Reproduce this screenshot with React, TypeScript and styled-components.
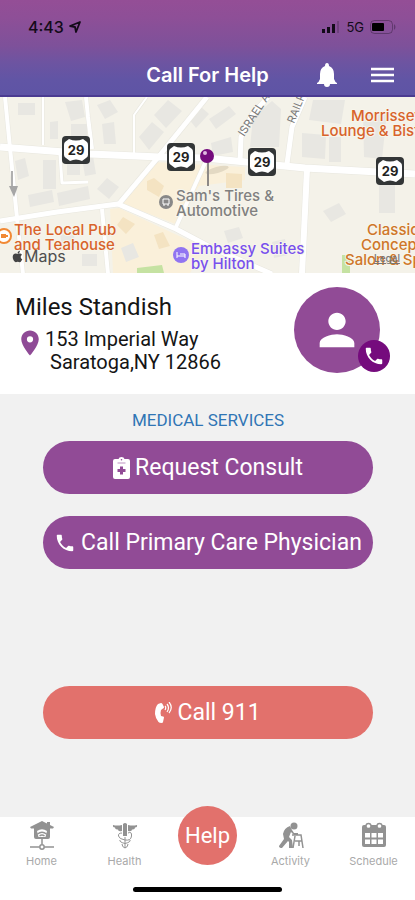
import React from "react";
import styled, { createGlobalStyle } from "styled-components";
import { MdPhone, MdPerson, MdLocationOn } from "react-icons/md";
import { FaApple } from "react-icons/fa";

const GlobalStyle = createGlobalStyle`
  *, *::before, *::after { box-sizing: border-box; }
  body { margin: 0; font-family: Roboto, "Liberation Sans", sans-serif; background: #fff; }
  button { font: inherit; border: 0; padding: 0; background: none; cursor: pointer; }
`;

const Screen = styled.div`
  min-height: 100vh;
  display: flex;
  flex-direction: column;
  background: #f1f1f1;
`;

const Header = styled.header`
  background: linear-gradient(#944e96 0%, #8e4f97 18%, #7e519a 48%, #6d54a1 66%, #6155a5 84%, #5e54a5 100%);
  border-bottom: 2px solid #4b3b91;
`;

const StatusBar = styled.div`
  display: flex;
  align-items: center;
  justify-content: space-between;
  height: 54px;
  padding: 0 19px 0 28px;
  color: #130b19;
  font-family: Inter, sans-serif;
`;

const StatusGroup = styled.div<{ $gap: number }>`
  display: flex;
  align-items: center;
  gap: ${(p) => p.$gap}px;
`;

const Clock = styled.span`
  font-size: 16px;
  font-weight: 500;
`;

const Network = styled.span`
  font-size: 13px;
`;

const TitleBar = styled.div`
  display: grid;
  grid-template-columns: 1fr auto 1fr;
  align-items: center;
  height: 41px;
  padding: 0 20px;
  color: #fff;
`;

const Title = styled.h1`
  grid-column: 2;
  margin: 0;
  font-family: Inter, sans-serif;
  font-size: 20px;
  line-height: 24px;
  font-weight: 600;
`;

const HeaderActions = styled.div`
  display: flex;
  align-items: center;
  justify-content: flex-end;
  gap: 32px;
`;

const IconButton = styled.button`
  display: flex;
  color: #fff;
`;

const MapArea = styled.section`
  height: 176px;
  background: #f4f2e9;
`;

const MapSvg = styled.svg`
  display: block;
  width: 100%;
  height: 100%;
  font-family: Inter, sans-serif;
  font-weight: 500;
`;

const Contact = styled.section`
  display: flex;
  justify-content: space-between;
  padding: 14px 35px 20px 15px;
  background: #fff;
  color: #151515;
`;

const Name = styled.h2`
  margin: 7px 0 8px;
  font-size: 24px;
  line-height: 26px;
  font-weight: 400;
`;

const AddressRow = styled.div`
  display: flex;
  color: #8f4a96;
`;

const Address = styled.address`
  color: #151515;
  font-style: normal;
  font-size: 20px;
  line-height: 23px;
`;

const AddressLine = styled.div<{ $indent?: boolean }>`
  padding-left: ${(p) => (p.$indent ? 5 : 0)}px;
`;

const Avatar = styled.div`
  position: relative;
  display: grid;
  place-items: center;
  flex: none;
  width: 86px;
  height: 86px;
  border-radius: 50%;
  background: #914b96;
  color: #fff;
`;

const CallBadge = styled.button`
  position: absolute;
  right: -10px;
  bottom: 1px;
  display: grid;
  place-items: center;
  width: 32px;
  height: 32px;
  border-radius: 50%;
  background: #750b7d;
  color: #fff;
`;

const Services = styled.main`
  flex: 1;
  display: flex;
  flex-direction: column;
  padding: 16px 42px 78px 43px;
`;

const SectionTitle = styled.h3`
  margin: 0 0 11px;
  text-align: center;
  color: #3075b5;
  font-size: 17px;
  line-height: 20px;
  font-weight: 400;
`;

const Pill = styled.button<{ $tone: "purple" | "coral" }>`
  display: flex;
  align-items: center;
  justify-content: center;
  gap: 5px;
  height: 53px;
  flex: none;
  border-radius: 27px;
  background: ${(p) => (p.$tone === "purple" ? "#914b96" : "#e2716c")};
  color: #fff;
  font-size: 23px;
  white-space: nowrap;

  & + & { margin-top: 22px; }
`;

const Emergency = styled.div`
  display: grid;
  margin-top: auto;
`;

const TabBar = styled.nav`
  display: grid;
  grid-template-columns: repeat(5, 1fr);
  height: 67px;
  background: #fff;
`;

const Tab = styled.button`
  display: flex;
  flex-direction: column;
  align-items: center;
  gap: 4px;
  padding-top: 3px;
  color: #929292;
  font-family: Inter, sans-serif;
  font-size: 11px;
  line-height: 14px;
`;

const TabLabel = styled.span`
  color: #a9a9a9;
`;

const HelpTab = styled.button`
  justify-self: center;
  width: 59px;
  height: 59px;
  margin-top: -11px;
  border-radius: 50%;
  background: #e2716c;
  color: #fff;
  font-size: 22px;
`;

const HomeIndicator = styled.div`
  display: flex;
  justify-content: center;
  padding: 3px 0 8px;
  background: #fff;

  &::after {
    content: "";
    width: 36%;
    height: 5px;
    border-radius: 3px;
    background: #000;
  }
`;

const roads: [string, number][] = [
  ["M0 50 90 57 160 60 205 61 305 71 415 77", 7],
  ["M5 0 10 51 17 121 23 177", 4],
  ["M43 0V48", 2],
  ["M86 0 88 20 92 52", 4],
  ["M147 0 134 18 134 57", 2],
  ["M207 0 160 58 118 108", 5],
  ["M0 124 57 115 118 107 176 132 210 150 272 177", 5],
  ["M176 130 205 66", 4],
  ["M102 112 108 177", 4],
  ["M60 58 62 86 88 85", 3],
  ["M240 65 241 40 252 18 268 0", 5],
  ["M287 67 292 30 305 0", 5],
  ["M307 72 302 177", 6],
];

const buildings =
  "M18 6h17v12h-17zM65 5l17-2 3 17-14 4zM50 25l8-1v18h-8zM71 27h16v17H71zM97 8l13-5 8 12-13 7zM102 27l12-2 2 22h-12zM139 40l13-15 12 10-15 18zM154 18l14-15 14 11-16 17zM188 21l12-12 9 8-13 14zM15 64l10-3 4 18-11 4zM43 63h13v29H43zM67 63h13v15H67zM82 61l11-2 3 18-11 2zM28 98l24-5 2 12-24 5zM57 96l31-7 2 13-31 7zM97 92l10-11 12 9-10 12zM60 134l13-2 3 20-14 2zM121 151l12-5 6 14-13 5zM82 157h15v12H82zM253 20l19-16 9 8-2 38h-29zM313 3h32l-4 24-32-4zM302 36l24 2-1 24-23-2zM329 40h12v25h-12zM363 15h24l-5 47-18-2zM379 88h16v28h-16zM323 114l16-8 7 11-15 8zM272 145l13-3 3 16-14 3zM224 134l15-4 4 11-15 5zM209 22l20-13 7 8-20 15zM211 46l20-6 2 15-20 4z";

const shields = [
  [76, 53],
  [181, 60],
  [262, 65],
  [390, 74],
];

function RouteShield({ x, y }: { x: number; y: number }) {
  return (
    <g transform={`translate(${x} ${y})`}>
      <rect x="-14" y="-14" width="28" height="28" rx="4" fill="#333637" />
      <path
        d="M-7-11Q0-8 7-11L11-8Q12-7 12-5V5Q12 7 10 8L6 11Q0 8-6 11L-10 8Q-12 7-12 5V-5Q-12-7-11-8Z"
        fill="#fff"
      />
      <text y="5" textAnchor="middle" fontSize="13" fontWeight="700" fill="#222">29</text>
    </g>
  );
}

function StreetMap() {
  return (
    <MapSvg viewBox="0 0 415 176" preserveAspectRatio="xMidYMid slice" role="img" aria-label="Map">
      <rect width="415" height="176" fill="#f4f2e9" />
      <path d="M153 65 245 70 245 83 199 89 178 128 121 106Z M110 112 119 111 205 151 190 176 113 176Z" fill="#faf0da" />
      <path d={buildings} fill="#e8e7e2" />
      <path d="M147 84l7-3 10 8-5 11-12-7zM117 128l6-8 12 7-9 10zM226 76l16 1v14h-16zM154 138l9-3 7 14-11 3z" fill="#f4e3c2" />
      <path d="M137 171l25-3 2 8h-27zM342 158h8v18h-8z" fill="#c5e2a2" />
      <g fill="none" stroke="#e8e7df" strokeLinejoin="round">
        {roads.map(([d, w]) => <path key={d} d={d} strokeWidth={w + 1} />)}
      </g>
      <g fill="none" stroke="#fff" strokeLinejoin="round">
        {roads.map(([d, w]) => <path key={d} d={d} strokeWidth={w} />)}
      </g>
      <path d="M12 74V90" stroke="#b0b0b0" strokeWidth="2" />
      <path d="M9 89h9l-4 11z" fill="#a6a6a6" />
      {shields.map(([x, y]) => <RouteShield key={x} x={x} y={y} />)}

      <g fontSize="11" fontWeight="400" fill="#777">
        <text transform="translate(244 40) rotate(-57)">ISRAEL A</text>
        <text transform="translate(294 27) rotate(-68)">RAILR</text>
      </g>

      <ellipse cx="217" cy="73" rx="12" ry="3" transform="rotate(-15 217 73)" fill="#877b6733" />
      <path d="M208 64V89" stroke="#8d8987" strokeWidth="2" />
      <circle cx="207" cy="59" r="7" fill="#750b7d" />
      <circle cx="205" cy="56" r="2" fill="#dfb9e0" />

      <g stroke="#f7f5eb" strokeWidth="2" paintOrder="stroke" fontSize="15" strokeLinejoin="round">
        <g fill="#808080">
          <text x="176" y="104">Sam's Tires &amp;</text>
          <text x="176" y="119">Automotive</text>
        </g>
        <g fill="#d8632b">
          <text x="14" y="138">The Local Pub</text>
          <text x="14" y="153">and Teahouse</text>
          <text x="351" y="24">Morrissey's</text>
          <text x="321" y="39">Lounge &amp; Bistro</text>
        </g>
        <g fill="#cf7629">
          <text x="367" y="138">Classic</text>
          <text x="361" y="153">Concepts</text>
          <text x="345" y="168">Salon &amp; Spa</text>
        </g>
        <g fill="#7850ed">
          <text x="191" y="157">Embassy Suites</text>
          <text x="191" y="172">by Hilton</text>
        </g>
      </g>
      <circle cx="166" cy="105" r="7" fill="#888" />
      <path d="M163 102h6v5h-6zM164 109v-2M168 109v-2" fill="none" stroke="#fff" />
      <circle cx="4" cy="139" r="7" fill="#fff" stroke="#f18a36" strokeWidth="2" />
      <path d="M1 137h5v4H1zM6 138h2v2H6" fill="#f18a36" />
      <circle cx="181" cy="158" r="8" fill="#9174f1" />
      <path d="M177 155v6M177 159h8v2M180 157h5v2" stroke="#fff" fill="none" />
      <FaApple x={11} y={153} size={13} color="#444" />
      <text x="24" y="165" fontSize="16" fontWeight="400" fill="#4e4e4e">Maps</text>
      <text x="374" y="165" fontSize="10" fill="#777" textDecoration="underline">Legal</text>
    </MapSvg>
  );
}

function LocationArrowIcon() {
  return (
    <svg width="14" height="14" viewBox="0 0 14 14" fill="none" stroke="currentColor" strokeWidth="1.8" strokeLinejoin="round" aria-hidden="true">
      <path d="M12 2 2 6l5 1 1 5Z" />
    </svg>
  );
}

function BellIcon() {
  return (
    <svg width="22" height="24" viewBox="0 0 22 24" fill="currentColor" aria-hidden="true">
      <path d="M11 0q2 0 2 3 5 2 5 8v5q1 3 3 4v1H1v-1q2-1 3-4v-5q0-6 5-8 0-3 2-3ZM8 21h6q0 3-3 3t-3-3Z" />
    </svg>
  );
}

function ClipboardIcon() {
  return (
    <svg width="17" height="22" viewBox="0 0 17 22" aria-hidden="true">
      <path d="M2 2h3.5q.5-2 3-2t3 2H15q2 0 2 2v16q0 2-2 2H2q-2 0-2-2V4q0-2 2-2Z" fill="#fff" />
      <path d="M4.5 6h8" stroke="#c9a4cb" strokeWidth="1.2" />
      <circle cx="8.500" cy="2.800" r=".8" fill="#914b96" />
      <path d="M7 9.500h3v2.500h2.500v3H10v2.500H7V15H4.500v-3H7Z" fill="#914b96" />
    </svg>
  );
}

function RingingPhoneIcon() {
  return (
    <svg width="17" height="22" viewBox="0 0 17 22" fill="currentColor" aria-hidden="true">
      <path d="M3 2 6 1q1 0 1.500 1L9 5q0 1-1 1.500L6 8q-1 3 0 6l2 .5q1 0 1 1l-1 4.500q0 1-1.500 1-2 0-3-1-3-3.500-3.500-8Q0 5 3 2Z" />
      <path d="M10 4q1.500 1.500 0 4M12 2q3 3.500 0 8M14 0q4.500 5.500 0 11" fill="none" stroke="currentColor" strokeWidth="1.200" />
    </svg>
  );
}

function HomeIcon() {
  return (
    <svg width="26" height="30" viewBox="0 0 26 30" fill="currentColor" aria-hidden="true">
      <path d="M13 1 1 7l1 1.500h3V17q0 2 2 2h12q2 0 2-2V8.500h3L25 7l-4-2V2h-3v1.500Z" />
      <path d="M8 11q5-3.500 10 0l-1.500 6h-7Z" fill="#fff" />
      <path d="M8.500 14q4.500-3.500 9 0M10.500 16q2.500-2 5 0M13 19v5M1 27h9.500M15.500 27H25" fill="none" stroke="currentColor" strokeWidth="1.500" />
      <circle cx="13" cy="27" r="2.200" fill="#fff" stroke="currentColor" strokeWidth="1.500" />
    </svg>
  );
}

function HealthIcon() {
  return (
    <svg width="26" height="30" viewBox="0 0 26 30" fill="currentColor" aria-hidden="true">
      <path d="M11 4q2-2 4 0v12h-4ZM10 5v6Q6 12 6 9.500 3 10 3 7.500.500 7.500 1 5q4 1 9 0ZM16 5v6q4 1 4-1.500 3 .5 3-2 2.500 0 2-2.500-4 1-9 0Z" />
      <path d="M10 13q-4 0-3.500 3T13 20t6.500-4-3.500-3M8 20q-1 2 5 3.500 6-1.500 5-3.500M10 24q0 3 3 4 3-1 3-4M13 17v11" fill="none" stroke="currentColor" strokeWidth="1" />
    </svg>
  );
}

function ActivityIcon() {
  return (
    <svg width="26" height="30" viewBox="0 0 26 30" fill="currentColor" aria-hidden="true">
      <circle cx="16" cy="6" r="3.500" />
      <path d="M12 6Q6 8 5 14l1 5-5 7q0 2 3 2l6-7 1 1v6h4l-1-8-3-3 2-5 3 3h4v-2h-4l-2-3Z" />
      <path d="M14 15h9l2 13M17 16l-2 12M24 21h-7M21 21v5" fill="none" stroke="currentColor" strokeWidth="1.500" />
    </svg>
  );
}

function ScheduleIcon() {
  return (
    <svg width="26" height="30" viewBox="0 0 26 30" fill="currentColor" aria-hidden="true">
      <path d="M3 5h20q2 0 2 2v18q0 2-2 2H3q-2 0-2-2V7q0-2 2-2Z" />
      <path d="M4 13h5v4.500H4zM10.500 13h5v4.500h-5zM17 13h5v4.500h-5zM4 19.500h5v4.500H4zM10.500 19.500h5v4.500h-5zM17 19.500h5v4.500h-5z" fill="#fff" />
      <circle cx="7.500" cy="6" r="2.500" fill="#fff" stroke="currentColor" strokeWidth="1.300" />
      <circle cx="18.500" cy="6" r="2.500" fill="#fff" stroke="currentColor" strokeWidth="1.300" />
    </svg>
  );
}

export default function App() {
  return (
    <>
      <GlobalStyle />
      <Screen>
        <Header>
          <StatusBar>
            <StatusGroup $gap={4}>
              <Clock>4:43</Clock>
              <LocationArrowIcon />
            </StatusGroup>
            <StatusGroup $gap={6}>
              <svg width="18" height="12" viewBox="0 0 18 12" fill="currentColor" aria-hidden="true">
                <path d="M0 8h3v4H0zM5 6h3v6H5zM10 3h3v9h-3z" />
                <path d="M15 0h2v12h-2z" opacity=".2" />
              </svg>
              <Network>5G</Network>
              <svg width="26" height="14" viewBox="0 0 26 14" aria-hidden="true">
                <rect x=".5" y=".5" width="22" height="13" rx="4" fill="none" stroke="#130b1955" />
                <rect x="2" y="3" width="12" height="8" rx="1" fill="#000" />
                <path d="M24 4q3 3 0 6Z" fill="#130b1955" />
              </svg>
            </StatusGroup>
          </StatusBar>
          <TitleBar>
            <Title>Call For Help</Title>
            <HeaderActions>
              <IconButton aria-label="Notifications"><BellIcon /></IconButton>
              <IconButton aria-label="Menu">
                <svg width="25" height="18" viewBox="0 0 25 18" stroke="currentColor" strokeWidth="2.500" aria-hidden="true">
                  <path d="M1 3h23M1 9h23M1 15h23" />
                </svg>
              </IconButton>
            </HeaderActions>
          </TitleBar>
        </Header>

        <MapArea><StreetMap /></MapArea>

        <Contact>
          <div>
            <Name>Miles Standish</Name>
            <AddressRow>
              <MdLocationOn size={30} />
              <Address>
                <AddressLine>153 Imperial Way</AddressLine>
                <AddressLine $indent>Saratoga,NY 12866</AddressLine>
              </Address>
            </AddressRow>
          </div>
          <Avatar>
            <MdPerson size={52} />
            <CallBadge aria-label="Call Miles Standish"><MdPhone size={22} /></CallBadge>
          </Avatar>
        </Contact>

        <Services>
          <SectionTitle>MEDICAL SERVICES</SectionTitle>
          <Pill $tone="purple"><ClipboardIcon />Request Consult</Pill>
          <Pill $tone="purple"><MdPhone size={22} />Call Primary Care Physician</Pill>
          <Emergency>
            <Pill $tone="coral"><RingingPhoneIcon />Call 911</Pill>
          </Emergency>
        </Services>

        <TabBar aria-label="Main">
          <Tab><HomeIcon /><TabLabel>Home</TabLabel></Tab>
          <Tab><HealthIcon /><TabLabel>Health</TabLabel></Tab>
          <HelpTab>Help</HelpTab>
          <Tab><ActivityIcon /><TabLabel>Activity</TabLabel></Tab>
          <Tab><ScheduleIcon /><TabLabel>Schedule</TabLabel></Tab>
        </TabBar>
        <HomeIndicator />
      </Screen>
    </>
  );
}
